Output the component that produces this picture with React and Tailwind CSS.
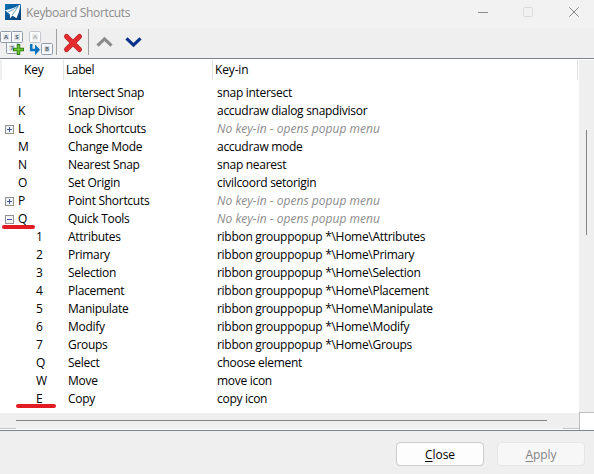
import React from "react";

const POPUP = "No key-in - opens popup menu";
const rows = [
  ["I", "Intersect Snap", "snap intersect"],
  ["K", "Snap Divisor", "accudraw dialog snapdivisor"],
  ["L", "Lock Shortcuts", POPUP, "plus"],
  ["M", "Change Mode", "accudraw mode"],
  ["N", "Nearest Snap", "snap nearest"],
  ["O", "Set Origin", "civilcoord setorigin"],
  ["P", "Point Shortcuts", POPUP, "plus"],
  ["Q", "Quick Tools", POPUP, "minus"],
  ["1", "Attributes", "ribbon grouppopup *\\Home\\Attributes", "child"],
  ["2", "Primary", "ribbon grouppopup *\\Home\\Primary", "child"],
  ["3", "Selection", "ribbon grouppopup *\\Home\\Selection", "child"],
  ["4", "Placement", "ribbon grouppopup *\\Home\\Placement", "child"],
  ["5", "Manipulate", "ribbon grouppopup *\\Home\\Manipulate", "child"],
  ["6", "Modify", "ribbon grouppopup *\\Home\\Modify", "child"],
  ["7", "Groups", "ribbon grouppopup *\\Home\\Groups", "child"],
  ["Q", "Select", "choose element", "child"],
  ["W", "Move", "move icon", "child"],
  ["E", "Copy", "copy icon", "child"],
];

function Expander({ open }) {
  return (
    <svg width="9" height="9" viewBox="0 0 9 9" shapeRendering="crispEdges" className="shrink-0">
      <rect x=".5" y=".5" width="8" height="8" fill="#f4f4f4" stroke="#919191" />
      <path d={open ? "M2 4.5h5" : "M2 4.5h5M4.5 2v5"} stroke="#3f5aa5" />
    </svg>
  );
}

function KeyCap({ x, y, label, muted }) {
  return (
    <g>
      <rect x={x + 0.5} y={y + 0.5} width="11" height="11" rx="1.2" fill="#fafbfc" stroke={muted ? "#c3c7cc" : "#8d99a8"} />
      <rect x={x + 3} y={y + 2.5} width="6" height="7" fill={muted ? "#ededed" : "#dfe3e8"} />
      <text x={x + 6} y={y + 8.3} textAnchor="middle" fontSize="6" fontWeight="700" fill={muted ? "#a9adb2" : "#52606e"}>{label}</text>
    </g>
  );
}

export default function App() {
  return (
    <div className="flex h-[474px] w-[594px] flex-col overflow-hidden bg-[#efefef] font-['Open_Sans',sans-serif] text-[12px] text-black">
      <div className="flex h-7 shrink-0 items-start bg-[#f2f2f2]">
        <svg width="16" height="16" viewBox="0 0 16 16" className="mt-1 ml-[5px] shrink-0">
          <defs>
            <linearGradient id="logo" x1="0" y1="0" x2="1" y2="1">
              <stop offset="0" stopColor="#0873b5" />
              <stop offset="1" stopColor="#053c78" />
            </linearGradient>
          </defs>
          <rect width="16" height="16" fill="url(#logo)" />
          <path d="M0 6.3Q9 4.8 15.6.3 14.6 8 11.5 14.2L7.3 11.6 5.2 14.4 4.8 10.2Z" fill="#fff" />
          <path d="M2.5 8.2Q9 5.6 13.2 2.2 10.5 7.2 7.2 10.8" stroke="#3c86b8" strokeWidth=".8" fill="none" />
        </svg>
        <span className="mt-1 ml-[5px] w-[380px] text-[12px] leading-[17px] tracking-[-0.33px] text-[#8b8b8b]">Keyboard Shortcuts</span>
        <svg width="188" height="28" viewBox="406 0 188 28" fill="none" className="shrink-0">
          <path d="M478 12.5h10" stroke="#8b8b8b" />
          <rect x="523.5" y="7.5" width="9" height="9" rx="1" stroke="#dadada" />
          <path d="m569.3 7.3 9.4 9.4m0-9.4-9.4 9.4" stroke="#858585" />
        </svg>
      </div>

      <div className="h-[30px] shrink-0">
        <svg width="150" height="30" viewBox="0 28 150 30" fill="none">
          <KeyCap x={0} y={31} label="A" />
          <KeyCap x={11} y={31} label="S" />
          <KeyCap x={6} y={42} label="7" />
          <path d="M18.5 44v11M13 49.5h11" stroke="#2b7d1b" strokeWidth="3.5" />
          <path d="M18.5 45v9M14 49.5h9" stroke="#75c62f" strokeWidth="1.6" />
          <KeyCap x={29} y={31} label="A" muted />
          <KeyCap x={41} y={43} label="B" />
          <path d="M31.2 44v6h5" stroke="#0874bd" strokeWidth="2.5" />
          <path d="m35 44.5 5 5.3-5 5.4z" fill="#0874bd" />
          <path d="M56.5 29v26M88.5 29v26" stroke="#a1a1a1" />
          <path d="m66.5 36.5 13 13m0-13-13 13" stroke="#b72126" strokeWidth="5" strokeLinecap="round" />
          <path d="m66.5 36.5 13 13m0-13-13 13" stroke="#e52c2c" strokeWidth="3.6" strokeLinecap="round" />
          <path d="m97.5 45.6 7-6.7 7 6.7" stroke="#8b8b8b" strokeWidth="3.2" />
          <path d="m126.5 38.4 7 6.7 7-6.7" stroke="#08318c" strokeWidth="3.2" />
        </svg>
      </div>

      <div className="flex h-[373px] shrink-0 border-y border-[#7d828d] bg-white">
        <div className="relative flex w-[579px] flex-col">
          <div className="flex h-[25px] shrink-0 pt-px leading-[20px]">
            <div className="flex h-5 w-16 border-r border-[#e2e2e2]">
              <span className="h-5 w-0.5 bg-[#efefef]" />
              <span className="ml-[22px] tracking-[-0.2px]">Key</span>
            </div>
            <div className="h-5 w-[149px] border-r border-[#e2e2e2] pl-0.5 tracking-[-0.4px]">Label</div>
            <div className="h-5 w-[365px] border-r border-[#e2e2e2] pl-0.5 tracking-[-0.15px]">Key-in</div>
          </div>
          {rows.map(([key, label, command, kind], i) => (
            <div key={i} className="flex h-[18px] shrink-0 items-center leading-[18px] tracking-[-0.29px]">
              <div className="flex w-[68px] shrink-0 items-center pl-[5px]">
                <span className="flex w-[13px] shrink-0">
                  {(kind === "plus" || kind === "minus") && <Expander open={kind === "minus"} />}
                </span>
                <span className={kind === "child" ? "ml-[18px]" : ""}>{key}</span>
              </div>
              <div className="w-[149px] shrink-0">{label}</div>
              <div className={command === POPUP ? "whitespace-nowrap text-[#8c8c8c] italic tracking-[0.03px]" : "whitespace-nowrap"}>{command}</div>
            </div>
          ))}
          <div className="mt-[5px] flex h-4 w-[579px] bg-[#efefef]">
            <div className="h-4 w-4 border-b border-[#c4c4c4]" />
            <div className="mt-[7px] h-px w-[531px] bg-[#858585]" />
            <div className="ml-auto h-4 w-4 border-b border-[#c4c4c4]" />
          </div>
          <div className="absolute top-[166px] left-0.5 h-1 w-[33px] rounded-full bg-[#e31b23]" />
          <div className="absolute top-[345px] left-4 h-1 w-10 rounded-full bg-[#e31b23]" />
        </div>
        <div className="mt-px flex w-[15px] flex-col bg-[#efefef]">
          <div className="mt-[70px] ml-[7px] h-[105px] w-px bg-[#858585]" />
          <div className="mt-auto h-[18px] border-t border-l border-[#bebebe] bg-white" />
        </div>
      </div>

      <div className="flex pt-[11px] pl-[396px] leading-[21px] tracking-[-0.1px]">
        <button className="h-6 w-[88px] rounded-[4px] border border-[#cccccc] bg-[#fdfdfd]"><span className="underline underline-offset-2">C</span>lose</button>
        <button className="ml-[13px] h-6 w-[88px] rounded-[4px] border border-[#e6e6e6] bg-[#f7f7f7] text-[#848484]"><span className="underline underline-offset-2">A</span>pply</button>
      </div>
    </div>
  );
}
